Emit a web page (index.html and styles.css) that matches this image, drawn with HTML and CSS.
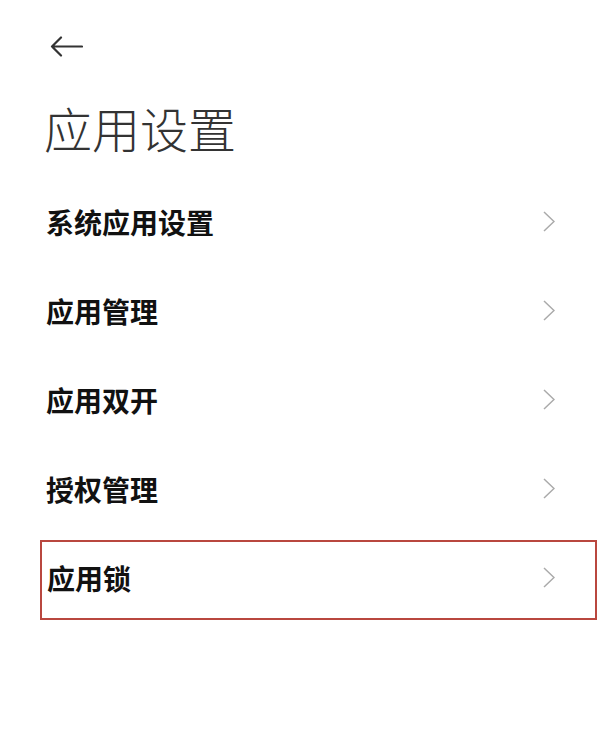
FILE: index.html
```html
<html><head><title>应用设置</title>
<meta charset="utf-8">
<link rel="stylesheet" href="styles.css">
</head>
<body>
    <div class="page">
        <div class="topbar">
            <svg class="back-icon" width="33" height="21" viewBox="0 0 33 21">
                <path d="M32 10.5H2M11 1.5L2 10.5L11 19.5" fill="none" stroke="#333" stroke-width="2.2" stroke-linecap="round" stroke-linejoin="round"/>
            </svg>
        </div>

        <h1 class="page-title">应用设置</h1>

        <div class="settings-list">
            <div class="settings-item">
                <span class="item-label">系统应用设置</span>
                <svg class="chevron" width="12" height="21" viewBox="0 0 12 21"><polyline points="1,1 11,10.5 1,20" fill="none" stroke="#aaa" stroke-width="1.5"/></svg>
            </div>
            <div class="settings-item">
                <span class="item-label">应用管理</span>
                <svg class="chevron" width="12" height="21" viewBox="0 0 12 21"><polyline points="1,1 11,10.5 1,20" fill="none" stroke="#aaa" stroke-width="1.5"/></svg>
            </div>
            <div class="settings-item">
                <span class="item-label">应用双开</span>
                <svg class="chevron" width="12" height="21" viewBox="0 0 12 21"><polyline points="1,1 11,10.5 1,20" fill="none" stroke="#aaa" stroke-width="1.5"/></svg>
            </div>
            <div class="settings-item">
                <span class="item-label">授权管理</span>
                <svg class="chevron" width="12" height="21" viewBox="0 0 12 21"><polyline points="1,1 11,10.5 1,20" fill="none" stroke="#aaa" stroke-width="1.5"/></svg>
            </div>
            <!-- highlighted entry -->
            <div class="settings-item highlighted">
                <span class="item-label">应用锁</span>
                <svg class="chevron" width="12" height="21" viewBox="0 0 12 21"><polyline points="1,1 11,10.5 1,20" fill="none" stroke="#aaa" stroke-width="1.5"/></svg>
            </div>
        </div>
    </div>
</body></html>
```

FILE: styles.css
```css
body {
    margin: 0;
    background: #ffffff;
    font-family: "Noto Sans CJK SC", "Noto Sans", sans-serif;
}

.page {
    width: 609px;
    height: 737px;
    background: #ffffff;
}

.topbar {
    padding: 36px 0 0 50px;
    height: 21px;
}

.back-icon {
    display: block;
}

.page-title {
    margin: 38px 0 0 44px;
    font-size: 48px;
    line-height: 64px;
    font-weight: 300;
    color: #333333;
}

.settings-list {
    margin-top: 18px;
    padding-left: 40px;
    width: 557px;
}

.settings-item {
    display: flex;
    align-items: center;
    justify-content: space-between;
    height: 89px;
    padding: 0 42px 0 6px;
    box-sizing: border-box;
}

.item-label {
    font-size: 28px;
    font-weight: 700;
    color: #111111;
}

.chevron {
    display: block;
}

.settings-item.highlighted {
    height: 80px;
    margin-top: 7px;
    border: 2px solid #b9473f;
    padding: 0 40px 5px 5px;
}
```
